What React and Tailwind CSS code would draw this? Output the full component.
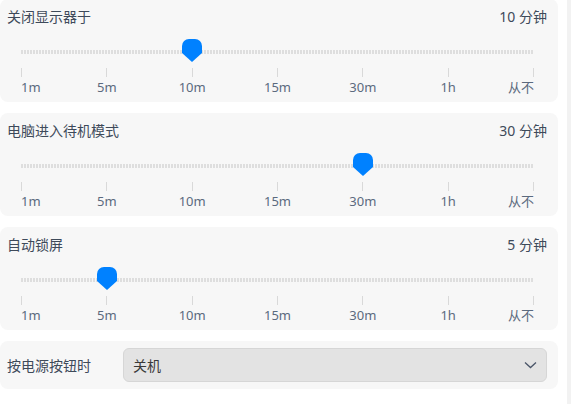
import React from 'react';

const marks = ['1m', '5m', '10m', '15m', '30m', '1h', '从不'];

const Thumb = () => (
  <svg width="20" height="23" viewBox="0 0 20 23">
    <path d="M7 0 H13 A7 7 0 0 1 20 7 V14 L10 23 L0 14 V7 A7 7 0 0 1 7 0 Z" fill="#0081ff" />
  </svg>
);

const SliderCard = ({ title, value, index }) => {
  const pct = (index / (marks.length - 1)) * 100;
  return (
    <div className="rounded-lg bg-[#f7f7f7] h-[103px] pt-[8px] pl-[7px] pr-[11px]">
      <div className="flex justify-between items-center leading-5 text-[14px] text-[#3e4a5a]">
        <span>{title}</span>
        <span>{value}</span>
      </div>
      <div className="ml-[14px] mr-[13px] mt-[23px] relative">
        <div className="h-[4px] bg-[repeating-linear-gradient(90deg,#dedede_0_2px,transparent_2px_3px)]" />
        <div
          className="absolute top-[-11px] -translate-x-1/2"
          style={{ left: `calc(${pct}% + 0.5px)` }}
        >
          <Thumb />
        </div>
        <div className="flex justify-between mt-[14px]">
          {marks.map((m, i) => (
            <div key={m} className="w-px relative flex flex-col items-center">
              <div className="w-px h-[9px] bg-[#d9d9d9]" />
              <span
                className={
                  'mt-[2px] text-[13px] leading-4 whitespace-nowrap text-[#5b6a7e] ' +
                  (i === 0 ? 'self-start' : i === marks.length - 1 ? 'self-end' : '')
                }
              >
                {m}
              </span>
            </div>
          ))}
        </div>
      </div>
    </div>
  );
};

export default function App() {
  return (
    <div
      className="flex w-[571px] h-[404px] bg-white overflow-hidden"
      style={{ fontFamily: '"Noto Sans", "Noto Sans CJK SC", sans-serif' }}
    >
      <div className="w-[558px] flex flex-col gap-[11px] -mt-px">
        <SliderCard title="关闭显示器于" value="10 分钟" index={2} />
        <SliderCard title="电脑进入待机模式" value="30 分钟" index={4} />
        <SliderCard title="自动锁屏" value="5 分钟" index={1} />
        <div className="rounded-lg bg-[#f7f7f7] h-[48px] flex items-center pl-[7px] pr-[11px]">
          <span className="w-[116px] text-[14px] text-[#3e4a5a]">按电源按钮时</span>
          <div className="flex-1 h-[34px] rounded-md bg-[#e3e3e3] border border-[#d6d6d6] flex items-center justify-between pl-[9px] pr-[9px]">
            <span className="text-[14px] text-[#3a3a3a]">关机</span>
            <svg width="13" height="8" viewBox="0 0 13 8">
              <path d="M1 1.5 L6.5 6.5 L12 1.5" fill="none" stroke="#4a5568" strokeWidth="1.3" />
            </svg>
          </div>
        </div>
      </div>
      <div className="flex-1" />
      <div className="w-[4px] h-full bg-[#f2f2f2]" />
    </div>
  );
}
